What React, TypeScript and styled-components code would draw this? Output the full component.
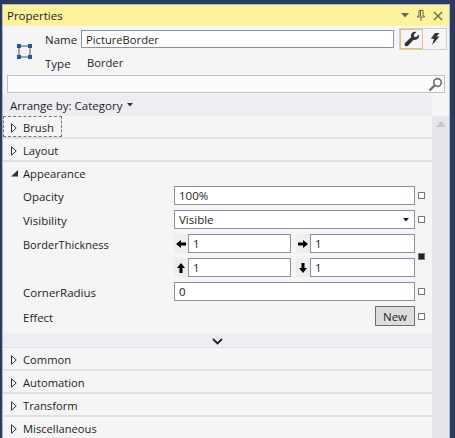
import styled, { createGlobalStyle } from 'styled-components';

const colors = {
  navy: '#2b3b5c',
  edge: '#a9b8d2',
  title: '#fff29d',
  panel: '#f5f5f5',
  band: '#eeeef2',
  track: '#e6e6ec',
  line: '#dfe0e6',
  field: '#8792a5',
  text: '#1e1e1e',
};

const Global = createGlobalStyle`
  html, body { margin: 0; padding: 0; background: ${colors.navy}; }
  body { width: 455px; height: 438px; overflow: hidden; }
  * { box-sizing: border-box; }
`;

const Shell = styled.div`
  width: 455px;
  height: 438px;
  padding: 4px 5px 0 2px;
  overflow: hidden;
`;

const Panel = styled.div`
  height: 434px;
  background: ${colors.panel};
  border: 1px solid ${colors.edge};
  border-width: 1px 1px 0 1px;
  font-family: 'Open Sans', 'Noto Sans', sans-serif;
  font-size: 11.5px;
  color: ${colors.text};
  display: flex;
  flex-direction: column;
  overflow: hidden;
`;

const TitleBar = styled.div`
  height: 21px;
  flex: none;
  background: ${colors.title};
  display: flex;
  align-items: center;
  padding: 0 6px 0 4px;
  font-size: 11.5px;
`;

const TitleText = styled.span`
  flex: 1;
`;

const TitleIcons = styled.div`
  display: flex;
  align-items: center;
  gap: 8px;
`;

const Header = styled.div`
  height: 68px;
  flex: none;
  padding: 2px 4px 0 4px;
  display: flex;
  flex-direction: column;
`;

const NameRow = styled.div`
  height: 22px;
  display: flex;
  align-items: center;
`;

const ElementIcon = styled.div`
  width: 38px;
  flex: none;
  padding-left: 10px;
  display: flex;
  margin-top: 12px;
  margin-bottom: -12px;
`;

const HeaderLabel = styled.span`
  width: 36px;
  flex: none;
  padding-top: 1px;
`;

const NameInput = styled.div`
  width: 313px;
  height: 18px;
  flex: none;
  background: #fff;
  border: 1px solid ${colors.field};
  padding-left: 4px;
  font-size: 11.2px;
  line-height: 17px;
`;

const ToolToggle = styled.div`
  margin-left: 5px;
  display: flex;
  border: 1px solid #ccced9;
  height: 22px;
`;

const ToolButton = styled.div<{ $active?: boolean }>`
  width: 23px;
  display: flex;
  align-items: center;
  justify-content: center;
  border: 1px solid ${(p) => (p.$active ? '#e6c36c' : 'transparent')};
`;

const TypeRow = styled.div`
  height: 21px;
  margin-top: 2px;
  padding-left: 38px;
  display: flex;
  align-items: center;
`;

const TypeValue = styled.span`
  padding-left: 6px;
  font-size: 11.2px;
`;

const SearchBox = styled.div`
  width: 438px;
  height: 18px;
  margin-top: 2px;
  flex: none;
  background: #fcfcfc;
  border: 1px solid #b9c3d4;
  display: flex;
  align-items: center;
  justify-content: flex-end;
  padding-right: 1px;
`;

const Body = styled.div`
  flex: 1;
  display: flex;
  flex-direction: column;
  min-height: 0;
`;

const ArrangeBar = styled.div`
  width: 429px;
  height: 22px;
  flex: none;
  background: ${colors.band};
  display: flex;
  align-items: center;
  gap: 5px;
  padding-left: 7px;
`;

const Content = styled.div`
  flex: 1;
  display: flex;
  min-height: 0;
`;

const List = styled.div`
  width: 429px;
  flex: none;
  display: flex;
  flex-direction: column;
`;

const Scrollbar = styled.div`
  width: 17px;
  flex: none;
  background: ${colors.track};
  display: flex;
  justify-content: center;
  padding-top: 5px;
`;

const Category = styled.div`
  position: relative;
  height: 23px;
  flex: none;
  display: flex;
  align-items: center;
  gap: 6px;
  padding-left: 8px;
  padding-top: 2px;
  font-size: 11.2px;
  border-bottom: 2px solid ${colors.line};
`;

const FocusRing = styled.span`
  position: absolute;
  left: 0;
  top: 0;
  width: 59px;
  height: 21px;
  border: 1px dashed #777;
`;

const Open = styled.div`
  height: 24px;
  flex: none;
  display: flex;
  align-items: center;
  gap: 5px;
  padding-left: 8px;
  padding-bottom: 2px;
  font-size: 11.2px;
`;

const PropGrid = styled.div`
  display: flex;
  flex-direction: column;
  gap: 5px;
  padding-left: 20px;
`;

const PropRow = styled.div`
  display: grid;
  grid-template-columns: 151px 241px 10px;
  align-items: center;
`;

const PropLabel = styled.span`
  padding-top: 2px;
`;

const Field = styled.div`
  height: 19px;
  background: #fff;
  border: 1px solid ${colors.field};
  padding: 0 5px 0 4px;
  line-height: 16px;
  display: flex;
  align-items: center;
  justify-content: space-between;
`;

const Marker = styled.span<{ $set?: boolean }>`
  width: 7px;
  height: 7px;
  margin-left: 3px;
  display: block;
  border: 1px solid #777;
  background: ${(p) => (p.$set ? '#222' : '#fff')};
`;

const ThicknessGrid = styled.div`
  display: grid;
  grid-template-columns: 117px 119px;
  column-gap: 5px;
  row-gap: 5px;
`;

const ThicknessCell = styled.div`
  display: flex;
`;

const ArrowBox = styled.div`
  width: 14px;
  flex: none;
  background: #eeeeef;
  display: flex;
  align-items: center;
  justify-content: center;
`;

const ThicknessField = styled(Field)`
  flex: 1;
`;

const ThicknessRow = styled(PropRow)`
  align-items: start;
`;

const ThicknessLabel = styled.span`
  font-size: 11px;
  line-height: 19px;
  padding-top: 1px;
`;

const ThicknessMarker = styled(Marker)`
  margin-top: 19px;
`;

const NewCell = styled.div`
  display: flex;
  justify-content: flex-end;
`;

const NewButton = styled.button`
  width: 40px;
  height: 20px;
  padding: 0;
  background: #dddddd;
  border: 1px solid #707070;
  font: inherit;
  color: inherit;
`;

const MoreBand = styled.div`
  height: 15px;
  margin-top: 7px;
  flex: none;
  background: ${colors.band};
  border-bottom: 1px solid ${colors.line};
  display: flex;
  align-items: center;
  justify-content: flex-end;
  padding: 2px 209px 0 0;
`;

const Tri = () => (
  <svg width="6" height="10" viewBox="0 0 6 10">
    <path d="M.5.8 5.2 5 .5 9.2Z" fill="#fff" stroke="#333" strokeWidth="1" />
  </svg>
);

const TriOpen = () => (
  <svg width="7" height="7" viewBox="0 0 7 7">
    <path d="M7 0V6.5H0Z" fill="#333" />
  </svg>
);

const Arrow = ({ rotate }: { rotate: number }) => (
  <svg width="10" height="10" viewBox="0 0 10 10" style={{ transform: `rotate(${rotate}deg)` }}>
    <path d="M0 5 5 1V3.5H10V6.5H5V9Z" fill="#000" />
  </svg>
);

const Caret = ({ color = '#333' }: { color?: string }) => (
  <svg width="6" height="4" viewBox="0 0 6 4">
    <path d="M0 0H6L3 3.5Z" fill={color} />
  </svg>
);

const closedTop = ['Common', 'Automation', 'Transform', 'Miscellaneous'];

export default function App() {
  return (
    <>
      <Global />
      <Shell>
        <Panel>
          <TitleBar>
            <TitleText>Properties</TitleText>
            <TitleIcons>
              <svg width="8" height="5" viewBox="0 0 8 5">
                <path d="M0 0H8L4 4.5Z" fill="#6d6850" />
              </svg>
              <svg width="8" height="11" viewBox="0 0 8 11">
                <path d="M2 .5H6V6H7.5V7H.5V6H2ZM3.5 1V6M4 7V11" fill="none" stroke="#6d6850" />
              </svg>
              <svg width="10" height="10" viewBox="0 0 10 10">
                <path d="M1 1 9 9M9 1 1 9" stroke="#6d6850" strokeWidth="1.4" />
              </svg>
            </TitleIcons>
          </TitleBar>
          <Header>
            <NameRow>
              <ElementIcon>
                <svg width="15" height="15" viewBox="0 0 15 15">
                  <rect x="2" y="2" width="11" height="11" fill="#f1f1f1" stroke="#555" />
                  <path d="M0 0H4V4H0ZM11 0H15V4H11ZM0 11H4V15H0ZM11 11H15V15H11Z" fill="#1c58a8" />
                </svg>
              </ElementIcon>
              <HeaderLabel>Name</HeaderLabel>
              <NameInput>PictureBorder</NameInput>
              <ToolToggle>
                <ToolButton $active>
                  <svg width="16" height="16" viewBox="0 0 16 16">
                    <path d="M15 3.5 12 6.2 10 5.6 9.7 3.8 12.4 1C10 .2 7.2 1.4 6.9 4.2 6.8 5 7 5.7 7.2 6.3L1.2 11.8C.2 13 .6 14.4 1.4 15 2.4 15.6 3.4 15.4 4.2 14.6L9.6 8.7C12.4 9.6 15.8 7.4 15 3.5Z" fill="#333" />
                  </svg>
                </ToolButton>
                <ToolButton>
                  <svg width="10" height="12" viewBox="0 0 10 12">
                    <path d="M5 0H9.5L6.5 3.6H9.5L2 12 4 5.8H.8Z" fill="#333" />
                  </svg>
                </ToolButton>
              </ToolToggle>
            </NameRow>
            <TypeRow>
              <HeaderLabel>Type</HeaderLabel>
              <TypeValue>Border</TypeValue>
            </TypeRow>
            <SearchBox>
              <svg width="15" height="15" viewBox="0 0 15 15">
                <circle cx="9.5" cy="5.5" r="3.8" fill="none" stroke="#707070" strokeWidth="1.7" />
                <path d="M6.5 8.5 1.5 13.5" stroke="#707070" strokeWidth="2.4" />
              </svg>
            </SearchBox>
          </Header>
          <Body>
            <ArrangeBar>
              Arrange by: Category
              <Caret />
            </ArrangeBar>
            <Content>
              <List>
                <Category>
                  <FocusRing />
                  <Tri />
                  Brush
                </Category>
                <Category>
                  <Tri />
                  Layout
                </Category>
                <Open>
                  <TriOpen />
                  Appearance
                </Open>
                <PropGrid>
                  <PropRow>
                    <PropLabel>Opacity</PropLabel>
                    <Field>100%</Field>
                    <Marker />
                  </PropRow>
                  <PropRow>
                    <PropLabel>Visibility</PropLabel>
                    <Field>
                      Visible
                      <Caret color="#222" />
                    </Field>
                    <Marker />
                  </PropRow>
                  <ThicknessRow>
                    <ThicknessLabel>BorderThickness</ThicknessLabel>
                    <ThicknessGrid>
                      <ThicknessCell>
                        <ArrowBox><Arrow rotate={0} /></ArrowBox>
                        <ThicknessField>1</ThicknessField>
                      </ThicknessCell>
                      <ThicknessCell>
                        <ArrowBox><Arrow rotate={180} /></ArrowBox>
                        <ThicknessField>1</ThicknessField>
                      </ThicknessCell>
                      <ThicknessCell>
                        <ArrowBox><Arrow rotate={90} /></ArrowBox>
                        <ThicknessField>1</ThicknessField>
                      </ThicknessCell>
                      <ThicknessCell>
                        <ArrowBox><Arrow rotate={-90} /></ArrowBox>
                        <ThicknessField>1</ThicknessField>
                      </ThicknessCell>
                    </ThicknessGrid>
                    <ThicknessMarker $set />
                  </ThicknessRow>
                  <PropRow>
                    <PropLabel>CornerRadius</PropLabel>
                    <Field>0</Field>
                    <Marker />
                  </PropRow>
                  <PropRow>
                    <PropLabel>Effect</PropLabel>
                    <NewCell>
                      <NewButton>New</NewButton>
                    </NewCell>
                    <Marker />
                  </PropRow>
                </PropGrid>
                <MoreBand>
                  <svg width="11" height="7" viewBox="0 0 11 7">
                    <path d="M1 1 5.5 5.5 10 1" fill="none" stroke="#222" strokeWidth="1.8" />
                  </svg>
                </MoreBand>
                {closedTop.map((name) => (
                  <Category key={name}>
                    <Tri />
                    {name}
                  </Category>
                ))}
              </List>
              <Scrollbar>
                <svg width="10" height="6" viewBox="0 0 10 6">
                  <path d="M0 6 5 0 10 6Z" fill="#c6c6cc" />
                </svg>
              </Scrollbar>
            </Content>
          </Body>
        </Panel>
      </Shell>
    </>
  );
}
